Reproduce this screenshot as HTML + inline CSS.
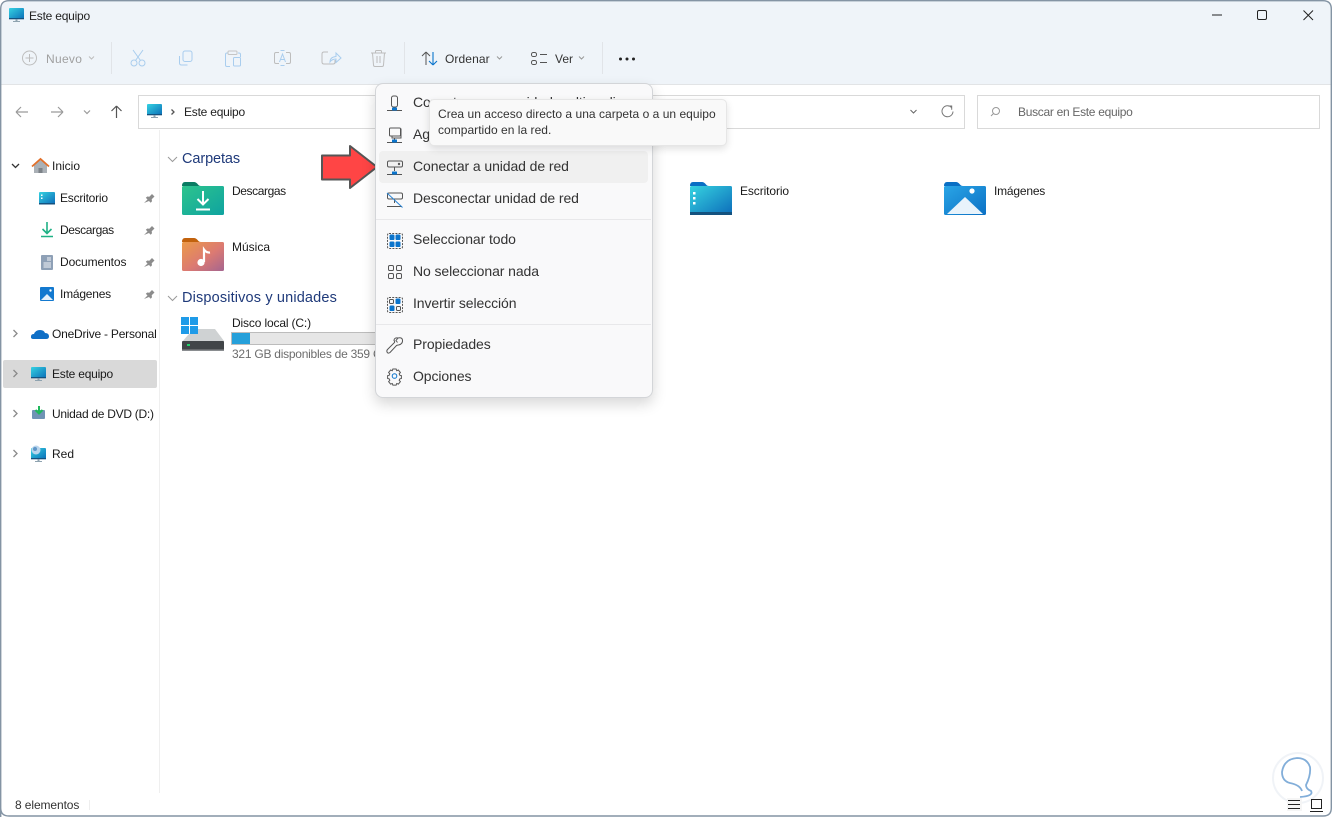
<!DOCTYPE html>
<html lang="es"><head><meta charset="utf-8"><title>Este equipo</title>
<style>
html,body{margin:0;padding:0;width:1332px;height:817px;overflow:hidden;background:#fff}
body{font-family:"Liberation Sans",sans-serif;position:relative;color:#1a1a1a}
.a{position:absolute}
.t{position:absolute;white-space:nowrap;font-size:12px;line-height:16px}
.s{letter-spacing:-.22px}
svg{position:absolute;overflow:visible}
.m{font-size:14px;line-height:18px;color:#333;left:413px;letter-spacing:-.09px}
.g{color:#1f3a7a;font-size:14.5px;line-height:18px}
.ln{fill:none;stroke:#555;stroke-width:1}
.bl{fill:none;stroke:#a9cdee;stroke-width:1}
.gr{fill:none;stroke:#bdbdbd;stroke-width:1}
.nav{fill:none;stroke:#9a9a9a;stroke-width:1.2}
</style></head><body>
<div class="a" style="left:0;top:0;width:1332px;height:84px;background:#eff4f9;border-bottom:1px solid #e2e4e6;border-radius:8px 8px 0 0"></div>
<svg width="1332" height="817" style="left:0;top:0">
<defs>
<linearGradient id="sc" x1="0" y1="0" x2="1" y2="1"><stop offset="0" stop-color="#35d2e2"/><stop offset="1" stop-color="#0b6fb8"/></linearGradient>
<linearGradient id="fd" x1="0" y1="0" x2="1" y2="1"><stop offset="0" stop-color="#2dc48d"/><stop offset="1" stop-color="#0fa3a0"/></linearGradient>
<linearGradient id="fm" x1="0" y1="0" x2="1" y2="1"><stop offset="0" stop-color="#eb9a48"/><stop offset=".55" stop-color="#dc7a72"/><stop offset="1" stop-color="#a5658f"/></linearGradient>
<linearGradient id="fe" x1="0" y1="0" x2="1" y2="1"><stop offset="0" stop-color="#36d3e0"/><stop offset="1" stop-color="#0c6cba"/></linearGradient>
<linearGradient id="fi" x1="0" y1="0" x2="1" y2="1"><stop offset="0" stop-color="#2aa5e6"/><stop offset="1" stop-color="#0b70c4"/></linearGradient>
<g id="mon"><rect x="0" y="0" width="15" height="11" rx="1" fill="url(#sc)"/><rect x="0" y="10" width="15" height="1.3" fill="#14527f"/><rect x="6.5" y="11.3" width="2" height="2" fill="#8fa3b0"/><rect x="4" y="13" width="7" height="1" fill="#8fa3b0"/></g>
<path id="pin" d="M-5 5l3.500-3.500-1.700-1.700 1.500-1.300 2 .3 2.700-2.800 2.500 2.500-2.800 2.700.3 2-1.300 1.500-1.700-1.700z" fill="#8c8c8c"/>
</defs>
<!-- window edge -->
<path d="M.7 817V9Q.7 .7 9 .7H1323Q1331.3 .7 1331.3 9V808Q1331.3 816 1323 816H9Q.7 816 .7 808" fill="none" stroke="#8494a4" stroke-width="1.4"/>
<use href="#mon" x="9" y="8"/>
<!-- window buttons -->
<path d="M1212 15h10" stroke="#222" fill="none"/><rect x="1257.5" y="10.5" width="9" height="9" rx="1.5" fill="none" stroke="#222"/><path d="M1303.5 10.5l9.5 9.5M1313 10.5l-9.5 9.5" stroke="#222" fill="none"/>
<!-- toolbar -->
<circle cx="29.5" cy="58" r="7" class="gr"/><path d="M29.5 54v8M25.5 58h8" class="gr"/>
<path d="M89 56.500l2.500 2.500 2.500-2.500" class="gr"/>
<path d="M111.500 42v32M404.500 42v32M602.500 42v32" stroke="#e1e4e8" fill="none"/>
<g class="bl"><circle cx="134" cy="63" r="3"/><circle cx="142" cy="63" r="3"/><path d="M135.500 60.500L143 50M140.500 60.500L133 50"/>
<rect x="183" y="51" width="9" height="10.500" rx="2"/><path d="M179.500 56v7q0 2 2 2h6"/>
<path d="M228 53h-1q-1.500 0-1.500 1.500V65q0 1.500 1.500 1.500h3M238 53h1q1.500 0 1.500 1.500V57"/><rect x="228" y="51" width="9" height="3.500" rx="1" stroke="#c5c5c5"/><rect x="233.500" y="57.500" width="7" height="8.500" rx="1"/>
<path d="M279 52.500h-3q-1.500 0-1.500 1.500v8q0 1.500 1.500 1.500h3M286 52.500h3q1.500 0 1.500 1.500v8q0 1.500-1.500 1.500h-3" stroke="#bdbdbd"/><path d="M279.500 62l3-8 3 8M280.500 59.500h4M282.500 50.500v0M280.500 50.500h4M280.500 65.500h4"/></g>
<path d="M328 52h-4q-2 0-2 2v8q0 2 2 2h9q2 0 2-2v-2" class="gr"/><path d="M330 62q0-5 6-5.500V53l5 5-5 4.500V59q-4 0-6 3z" class="bl"/>
<path d="M371 53h15M375.500 53v-1.500q0-1 1-1h4q1 0 1 1V53M372.500 53l1 12q0 1.500 1.500 1.500h7q1.500 0 1.500-1.500l1-12M377 56v7M380 56v7" class="gr"/>
<path d="M426 65V52M426 52l-4 4M426 52l4 4" stroke="#555" fill="none"/><path d="M433 52v13M433 65l-4-4M433 65l4-4" stroke="#0a74cc" fill="none" stroke-width="1.100"/>
<path d="M497 56.500l2.500 2.500 2.500-2.500M579 56.500l2.500 2.500 2.500-2.500" fill="none" stroke="#999"/>
<rect x="531.500" y="52.500" width="5" height="4" rx="1.800" class="ln"/><rect x="531.500" y="60.500" width="5" height="4" rx="1.800" class="ln"/><path d="M540 54.500h7M540 62.500h7" class="ln"/>
<circle cx="620.500" cy="59" r="1.500" fill="#222"/><circle cx="627" cy="59" r="1.500" fill="#222"/><circle cx="633.500" cy="59" r="1.500" fill="#222"/>
<!-- nav -->
<path d="M28 112H16M16 112l5-5M16 112l5 5M51 112h12M63 112l-5-5M63 112l-5 5M84 110.500l3 3 3-3" class="nav"/>
<path d="M116.500 118v-12M116.500 106l-5 5M116.500 106l5 5" fill="none" stroke="#555" stroke-width="1.200"/>
<rect x="138.500" y="95.500" width="826" height="33" fill="#fff" stroke="#d9d9d9"/>
<rect x="977.500" y="95.500" width="342" height="33" fill="#fff" stroke="#d9d9d9"/>
<use href="#mon" x="147" y="104"/>
<path d="M171.500 109.500l2.500 2.500-2.500 2.500" fill="none" stroke="#555" stroke-width="1.300"/>
<path d="M910.500 110l3 3 3-3" fill="none" stroke="#666"/>
<path d="M951.500 107.500a5.500 5.500 0 1 0 1.500 4M948 106h3.700v3.700" fill="none" stroke="#777"/>
<circle cx="996" cy="111" r="3.500" fill="none" stroke="#999"/><path d="M993.500 113.500l-2.500 2.500" stroke="#999" fill="none"/>
<!-- sidebar -->
<path d="M159.500 130v663" stroke="#efefef" fill="none"/>
<rect x="3" y="360" width="154" height="28" rx="2" fill="#d9d9d9"/>
<path d="M12 164l3.500 3.500 3.500-3.500" fill="none" stroke="#333" stroke-width="1.300"/>
<path d="M13.500 330l3.500 3.500-3.500 3.500M13.500 370l3.500 3.500-3.500 3.500M13.500 410l3.500 3.500-3.500 3.500M13.500 450l3.500 3.500-3.500 3.500" fill="none" stroke="#8a8a8a" stroke-width="1.300"/>
<path d="M34 165v8h13v-8l-6.500-5z" fill="#aab0b6"/><rect x="38.500" y="168" width="4" height="5" fill="#7c8288"/><path d="M32 166.500l8.500-7.500 8.500 7.500" fill="none" stroke="#e2702a" stroke-width="1.800"/>
<rect x="39" y="192" width="16" height="12" rx="1" fill="url(#fe)"/><rect x="39" y="203" width="16" height="1.500" fill="#14527f"/><rect x="41" y="194.500" width="1.500" height="1.500" fill="#fff"/><rect x="41" y="197.500" width="1.500" height="1.500" fill="#fff"/>
<path d="M47 222v11M42.500 229l4.500 4.500 4.500-4.500M41 236.500h12" fill="none" stroke="#1fb185" stroke-width="1.600"/>
<rect x="41" y="255" width="12" height="15" rx="1" fill="#8ea0b6"/><path d="M47 258h4M47 260h4M43.500 263h7.500M43.500 265h7.500M43.500 267h7.500" stroke="#f2f5f8" fill="none"/>
<rect x="40" y="287" width="14" height="14" rx="1" fill="#1379cf"/><path d="M41 300l6-6 6 6z" fill="#e6f1fa"/><circle cx="50.500" cy="290.500" r="1.200" fill="#fff"/>
<use href="#pin" x="149" y="198"/><use href="#pin" x="149" y="230"/><use href="#pin" x="149" y="262"/><use href="#pin" x="149" y="294"/>
<path d="M33.500 339q-3 0-2.500-2.500 0-2.500 3-2.500 1.500-4 6-4 4 0 5 3 4 0 4 3.500 0 2.500-3 2.500z" fill="#0f6fc6"/>
<use href="#mon" x="31" y="367"/>
<rect x="32" y="410" width="13" height="9" rx="1" fill="#6f93b5"/><path d="M39 406v6M35.500 410l3.500 3.500 3.500-3.500" fill="none" stroke="#1fb85c" stroke-width="2"/>
<use href="#mon" x="31" y="448"/><circle cx="36" cy="450" r="4.500" fill="#b9d5ec"/><circle cx="35" cy="449" r="2" fill="#5f96c8"/>
<!-- section heads -->
<path d="M168 157l4.500 4.500 4.500-4.500M168 296l4.500 4.500 4.500-4.500" fill="none" stroke="#9a9a9a"/>
<!-- folders -->
<g><path d="M182 186q0-4 3-4h9q2 0 4 2.500 1 1.500 3 1.500z" fill="#0a7c63"/><rect x="182" y="186" width="42" height="29" rx="1.500" fill="url(#fd)"/><path d="M203 191v13M197.500 199l5.500 5.500 5.500-5.500M196 209.500h14" fill="none" stroke="#fff" stroke-width="2"/></g>
<g><path d="M182 242q0-4 3-4h9q2 0 4 2.500 1 1.500 3 1.500z" fill="#c2620d"/><rect x="182" y="242" width="42" height="29" rx="1.500" fill="url(#fm)"/><circle cx="201" cy="262.500" r="3.600" fill="#fff"/><path d="M204 262v-12.500q2.500 3.500 6 3" fill="none" stroke="#fff" stroke-width="2.200"/></g>
<g><path d="M690 186q0-4 3-4h9q2 0 4 2.500 1 1.500 3 1.500z" fill="#0a6fc4"/><rect x="690" y="186" width="42" height="29" rx="1.500" fill="url(#fe)"/><rect x="690" y="212" width="42" height="3" fill="#14527f"/><rect x="693" y="192" width="2.500" height="2.500" fill="#fff"/><rect x="693" y="197" width="2.500" height="2.500" fill="#fff"/><rect x="693" y="202" width="2.500" height="2.500" fill="#fff"/></g>
<g><path d="M944 186q0-4 3-4h9q2 0 4 2.500 1 1.500 3 1.500z" fill="#0a6fc4"/><rect x="944" y="186" width="42" height="29" rx="1.500" fill="url(#fi)"/><path d="M947 214l18-17 18 17z" fill="#e8f3fb"/><circle cx="972" cy="191" r="2.600" fill="#fff"/></g>
<!-- drive -->
<path d="M188 335l7-6h20l9 12v1h-42z" fill="#cfd2d3"/>
<g fill="#1f9be8"><rect x="181" y="317" width="8" height="8"/><rect x="190" y="317" width="8" height="8"/><rect x="181" y="326" width="8" height="8"/><rect x="190" y="326" width="8" height="8"/></g>
<rect x="182" y="341" width="42" height="10" rx="1" fill="#414548"/><rect x="182" y="349.500" width="42" height="1.500" fill="#8a8d90"/><rect x="187" y="344" width="3" height="2" fill="#22d06a"/>
<rect x="231.500" y="332.500" width="150" height="12" fill="#e6e6e6" stroke="#bcbcbc"/><rect x="232" y="333" width="18" height="11" fill="#26a0da"/>
<!-- status -->
<path d="M89.500 800v10" stroke="#eee" fill="none"/>
<!-- watermark -->
<circle cx="1298" cy="778" r="25" fill="#fff" stroke="#f0f3f7" stroke-width="2"/>
<path d="M1300 797Q1314 796 1311 791 1306 789 1306 785 1311 775 1310 767 1307 758 1297 758 1284 759 1282 772 1282 781 1290 783 1300 785 1302 791" fill="none" stroke="#82aed9" stroke-width="1.800"/>
<rect x="1287" y="798" width="15" height="13" fill="#f5f5f5"/><path d="M1288 800.500h12M1288 804.500h12M1288 808.500h12" stroke="#222" fill="none"/>
<rect x="1311.500" y="799.500" width="10" height="9" fill="none" stroke="#222"/><path d="M1310 811.500h13" stroke="#222" fill="none"/>
<!-- arrow -->
<path d="M322 155.500h28V146l27 21-27 21v-8.500h-28z" fill="#ff4545" stroke="#565656" stroke-width="2" stroke-linejoin="round"/>
</svg>

<div class="t s" style="left:29px;top:8px;color:#222">Este equipo</div>
<div class="t" style="left:46px;top:51px;color:#a0a0a0;letter-spacing:.3px">Nuevo</div>
<div class="t" style="left:445px;top:51px;color:#333;letter-spacing:.1px">Ordenar</div>
<div class="t" style="left:555px;top:51px;color:#333">Ver</div>
<div class="t s" style="left:184px;top:104px;color:#222">Este equipo</div>
<div class="t" style="left:1018px;top:104px;color:#666;letter-spacing:-.3px">Buscar en Este equipo</div>

<div class="t" style="left:52px;top:158px">Inicio</div>
<div class="t s" style="left:60px;top:190px">Escritorio</div>
<div class="t s" style="left:60px;top:222px;letter-spacing:-.4px">Descargas</div>
<div class="t s" style="left:60px;top:254px;letter-spacing:-.1px">Documentos</div>
<div class="t s" style="left:60px;top:286px">Imágenes</div>
<div class="t s" style="left:52px;top:326px">OneDrive - Personal</div>
<div class="t s" style="left:52px;top:366px">Este equipo</div>
<div class="t s" style="left:52px;top:406px;letter-spacing:-.28px">Unidad de DVD (D:)</div>
<div class="t" style="left:52px;top:446px">Red</div>

<div class="t g" style="left:182px;top:150px;letter-spacing:-.1px">Carpetas</div>
<div class="t g" style="left:182px;top:289px;letter-spacing:.15px">Dispositivos y unidades</div>
<div class="t" style="left:232px;top:183px;letter-spacing:-.4px">Descargas</div>
<div class="t" style="left:232px;top:239px">Música</div>
<div class="t" style="left:740px;top:183px;letter-spacing:-.1px">Escritorio</div>
<div class="t" style="left:994px;top:183px;letter-spacing:-.2px">Imágenes</div>
<div class="t" style="left:232px;top:315px;letter-spacing:-.15px">Disco local (C:)</div>
<div class="t" style="left:232px;top:346px;color:#6d6d6d;width:143px;overflow:hidden;letter-spacing:-.25px">321 GB disponibles de 359 GB</div>
<div class="t" style="left:15px;top:797px;color:#333;letter-spacing:-.1px">8 elementos</div>

<!-- menu -->
<div class="a" style="left:375px;top:83px;width:276px;height:313px;background:#f9f9fa;border:1px solid #d3d5d8;border-radius:8px;box-shadow:0 6px 14px rgba(0,0,0,.16)"></div>
<div class="a" style="left:379px;top:151px;width:269px;height:32px;background:#f0f0f0;border-radius:4px"></div>
<div class="a" style="left:376px;top:219px;width:275px;height:1px;background:#e8e8ea"></div>
<div class="a" style="left:376px;top:324px;width:275px;height:1px;background:#e8e8ea"></div>
<div class="t m" style="top:93px">Conectar a una unidad multimedia</div>
<div class="t m" style="top:125px">Agregar una ubicación de red</div>
<div class="t m" style="top:157px">Conectar a unidad de red</div>
<div class="t m" style="top:189px">Desconectar unidad de red</div>
<div class="t m" style="top:230px">Seleccionar todo</div>
<div class="t m" style="top:262px">No seleccionar nada</div>
<div class="t m" style="top:294px">Invertir selección</div>
<div class="t m" style="top:335px">Propiedades</div>
<div class="t m" style="top:367px">Opciones</div>
<svg width="1332" height="817" style="left:0;top:0">
<g fill="none" stroke="#555">
<rect x="391.500" y="96" width="6" height="11" rx="2"/><path d="M394.500 107v3M387 110.500h15"/>
<rect x="389.500" y="128" width="11" height="8" rx="1"/><path d="M392 136v2h9v-9h-1M394.500 138v3M387 142.500h15"/>
<rect x="387.500" y="161" width="15" height="6" rx="1.500"/><path d="M394.500 167v4M387 174.500h15"/><circle cx="399" cy="164" r=".7"/>
<rect x="387.500" y="193" width="15" height="6" rx="1.500"/><path d="M394.500 199v4M387 206.500h15"/>
</g>
<path d="M387 193l15.500 14.500" stroke="#2a86d8" fill="none"/>
<g fill="#0a74cc"><rect x="392" y="171.500" width="5" height="3" rx=".5"/><rect x="392" y="107.500" width="5" height="3" rx=".5"/><rect x="392" y="139.500" width="5" height="3" rx=".5"/></g>
<rect x="387.500" y="233.500" width="15" height="15" rx="1.500" fill="none" stroke="#555" stroke-dasharray="2 1.200"/>
<g fill="#0a74cc"><rect x="389.500" y="234.500" width="5" height="5.500" rx="1.300"/><rect x="395.500" y="234.500" width="5" height="5.500" rx="1.300"/><rect x="389.500" y="241.500" width="5" height="5.500" rx="1.300"/><rect x="395.500" y="241.500" width="5" height="5.500" rx="1.300"/></g>
<g fill="none" stroke="#555"><rect x="388.500" y="265.500" width="5" height="5" rx="1.300"/><rect x="396.500" y="265.500" width="5" height="5" rx="1.300"/><rect x="388.500" y="273.500" width="5" height="5" rx="1.300"/><rect x="396.500" y="273.500" width="5" height="5" rx="1.300"/></g>
<rect x="387.500" y="297.500" width="15" height="15" rx="1.500" fill="none" stroke="#555" stroke-dasharray="2 1.200"/>
<g fill="#0a74cc"><rect x="395.500" y="298.500" width="5" height="5.500" rx="1.300"/><rect x="389.500" y="305.500" width="5" height="5.500" rx="1.300"/></g>
<g fill="none" stroke="#555"><rect x="389.500" y="299.500" width="4" height="4" rx="1"/><rect x="396.500" y="306.500" width="4" height="4" rx="1"/></g>
<path d="M398 338q4-1 4.500 2 .5 4-4 5-1 0-2 .5l-6.500 7q-2 1.500-3-.5-.5-1.500.5-2.500l7-7q.5-1-.5-2 0-3 4-2.500l-2 2.500 1.500 2" fill="none" stroke="#555"/>
<g transform="translate(394.500 376) scale(.82) translate(-394.500 -378)"><path d="M392.500 369.500h4l.7 2 2-.8 2.500 3-1.500 1.700.7 1.600 2 .6v3.400l-2 .6-.7 1.600 1.500 1.700-2.500 3-2-.8-.7 2h-4l-.7-2-2 .8-2.500-3 1.500-1.700-.7-1.600-2-.6v-3.400l2-.6.7-1.600-1.500-1.700 2.500-3 2 .8z" fill="none" stroke="#555" stroke-width="1.200"/>
<circle cx="394.500" cy="378" r="2.800" fill="none" stroke="#0a74cc" stroke-width="1.200"/></g>
</svg>
<!-- tooltip -->
<div class="a" style="left:429px;top:99px;width:296px;height:45px;background:#f9f9f9;border:1px solid #e6e6e6;border-radius:5px;box-shadow:0 3px 8px rgba(0,0,0,.12)"></div>
<div class="t" style="left:438px;top:106px;color:#333;letter-spacing:.03px">Crea un acceso directo a una carpeta o a un equipo</div>
<div class="t" style="left:438px;top:122px;color:#333;letter-spacing:.03px">compartido en la red.</div>
</body></html>
